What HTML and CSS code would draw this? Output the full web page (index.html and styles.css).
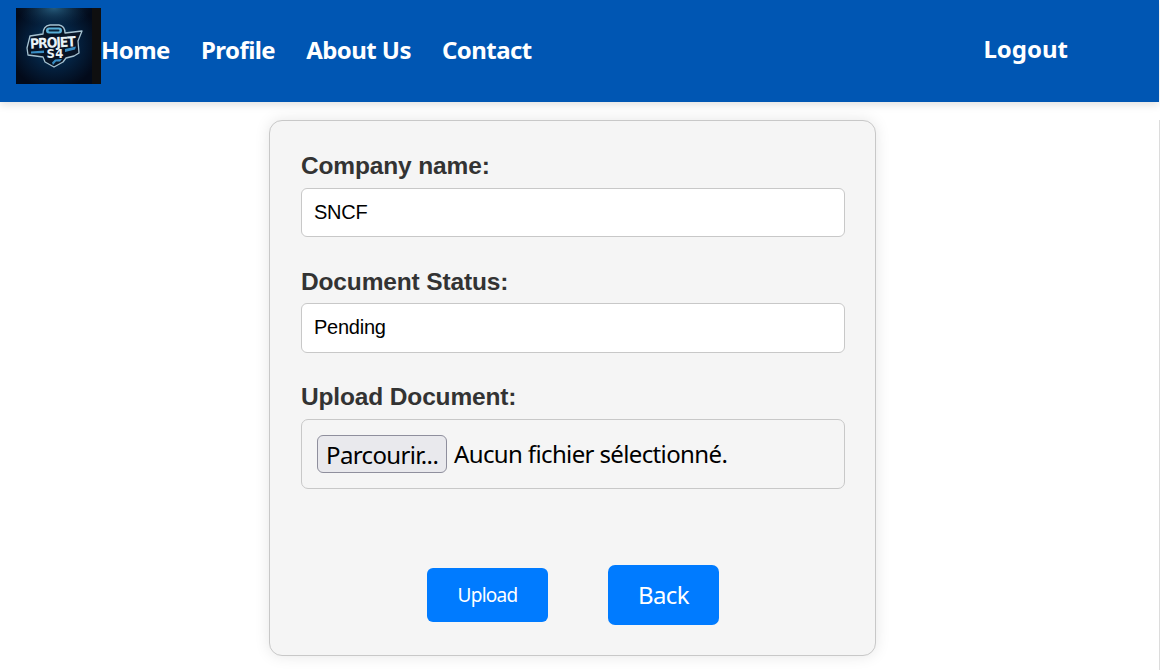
FILE: index.html
```html
<!DOCTYPE html>
<html lang="en">
<head>
<meta charset="utf-8">
<title>Upload Document</title>
<link rel="stylesheet" href="styles.css">
</head>
<body>
<header class="navbar">
  <svg class="logo" viewBox="0 0 85 76" role="img" aria-label="Projet S4">
    <defs>
      <radialGradient id="glow" cx="0.5" cy="0.48" r="0.6">
        <stop offset="0" stop-color="#063c66"/>
        <stop offset="0.55" stop-color="#041f3c"/>
        <stop offset="1" stop-color="#020a1a"/>
      </radialGradient>
      <radialGradient id="beam" cx="0.5" cy="0" r="0.5">
        <stop offset="0" stop-color="#2b6485" stop-opacity="0.9"/>
        <stop offset="1" stop-color="#0a2c4a" stop-opacity="0"/>
      </radialGradient>
    </defs>
    <rect width="85" height="76" fill="#0f0f10"/>
    <rect width="76" height="76" fill="url(#glow)"/>
    <rect width="76" height="40" fill="url(#beam)"/>
    <path d="M14 28 L27 26 Q27 18 34 17 L43 17 Q49 18 49 25 L66 23 L62 33 L63 45 L58 48 L50 50 L47 54 L38 59 L29 54 L27 49 L12 47 L11 40 Z" fill="#071426" stroke="#a6c2d1" stroke-width="1.3" stroke-linejoin="round"/>
    <rect x="30" y="19.500" width="16" height="6" rx="3" fill="#58aed5"/>
    <rect x="32.500" y="21.500" width="11" height="2" rx="1" fill="#0b253b"/>
    <path d="M15 43.500 L28 42.500 V45 L15 45.500 Z M49 41 L60 38.500 L59 41.500 L49 44 Z M36 54.500 L39 51.500 L46 51 L44 53.500 L40 53.500 L37 57 Z" fill="#398dc4"/>
    <text class="logo-name" x="14" y="39.500" textLength="46" lengthAdjust="spacing" transform="rotate(-3 37 36)">PROJET</text>
    <text class="logo-mark" x="30.500" y="50" textLength="17" lengthAdjust="spacing">S4</text>
  </svg>
  <nav class="links">
    <a>Home</a><a>Profile</a><a>About Us</a><a>Contact</a>
  </nav>
  <a class="logout">Logout</a>
</header>
<main class="content">
  <form class="card">
    <label class="label">Company name:</label>
    <div class="field">SNCF</div>
    <label class="label">Document Status:</label>
    <div class="field">Pending</div>
    <label class="label">Upload Document:</label>
    <div class="file">
      <span class="browse">Parcourir...</span>
      <span class="filename">Aucun fichier sélectionné.</span>
    </div>
    <div class="actions">
      <button class="btn btn-upload" type="button">Upload</button>
      <button class="btn btn-back" type="button">Back</button>
    </div>
  </form>
  <div class="edge"></div>
</main>
</body>
</html>
```
FILE: styles.css
```css
* { box-sizing: border-box; }
body {
  margin: 0;
  height: 670px;
  overflow: hidden;
  background: #fff;
  font-family: "Noto Sans", sans-serif;
}
.navbar {
  display: flex;
  align-items: flex-start;
  width: 1159px;
  height: 101.500px;
  padding: 8px 91px 0 16px;
  background: #0056b3;
  box-shadow: 0 3px 8px rgba(0, 0, 0, 0.12);
  color: #fff;
  font-size: 24px;
  font-weight: 700;
  line-height: 34px;
}
.logo { width: 85px; height: 76px; flex: none; }
.logo-name { font: 700 14px "DejaVu Sans Condensed", "DejaVu Sans", sans-serif; fill: #e8f1f6; }
.logo-mark { font: 700 13px "DejaVu Sans Condensed", "DejaVu Sans", sans-serif; fill: #e8f1f6; }
.links {
  display: flex;
  gap: 31px;
  padding-top: 25px;
  letter-spacing: -0.55px;
}
.logout { margin-left: auto; padding-top: 24px; }
.content {
  display: flex;
  height: 568.5px;
  padding: 18.500px 0 0 269px;
}
.edge {
  width: 1px;
  height: 551px;
  margin-left: auto;
  background: #dcdcdc;
}
.card {
  width: 607px;
  height: 536px;
  padding: 30px 30px 30px 31px;
  border: 1px solid #c8c8c8;
  border-radius: 13px;
  background: #f5f5f5;
  box-shadow: 0 0 15px rgba(0, 0, 0, 0.1);
}
.label {
  display: block;
  height: 36.500px;
  color: #333;
  font: 700 24.5px/30px "Liberation Sans", sans-serif;
  letter-spacing: -0.15px;
}
.field {
  height: 49.500px;
  margin-bottom: 29.500px;
  padding: 0 12px;
  border: 1px solid #c8c8c8;
  border-radius: 6px;
  background: #fff;
  color: #000;
  font: 20px/47px "Liberation Sans", sans-serif;
  letter-spacing: -0.25px;
}
.file {
  display: flex;
  align-items: center;
  gap: 7px;
  height: 70px;
  padding: 0 15px;
  border: 1px solid #c8c8c8;
  border-radius: 7px;
  color: #000;
  font-size: 24px;
  letter-spacing: -0.63px;
  white-space: nowrap;
}
.browse {
  width: 130px;
  height: 38px;
  padding-left: 8px;
  border: 1px solid #8f8f9d;
  border-radius: 6px;
  background: #e9e9ed;
  line-height: 37px;
}
.actions {
  display: flex;
  align-items: center;
  justify-content: center;
  gap: 60px;
  margin-top: 76px;
}
.btn {
  padding: 0;
  border: 0;
  background: #007bff;
  color: #fff;
  font-family: "Noto Sans", sans-serif;
}
.btn-upload { width: 121px; height: 54px; border-radius: 6px; font-size: 19px; letter-spacing: -0.75px; }
.btn-back { width: 111px; height: 60px; padding-bottom: 1px; border-radius: 7px; font-size: 24px; letter-spacing: -0.6px; }
```
